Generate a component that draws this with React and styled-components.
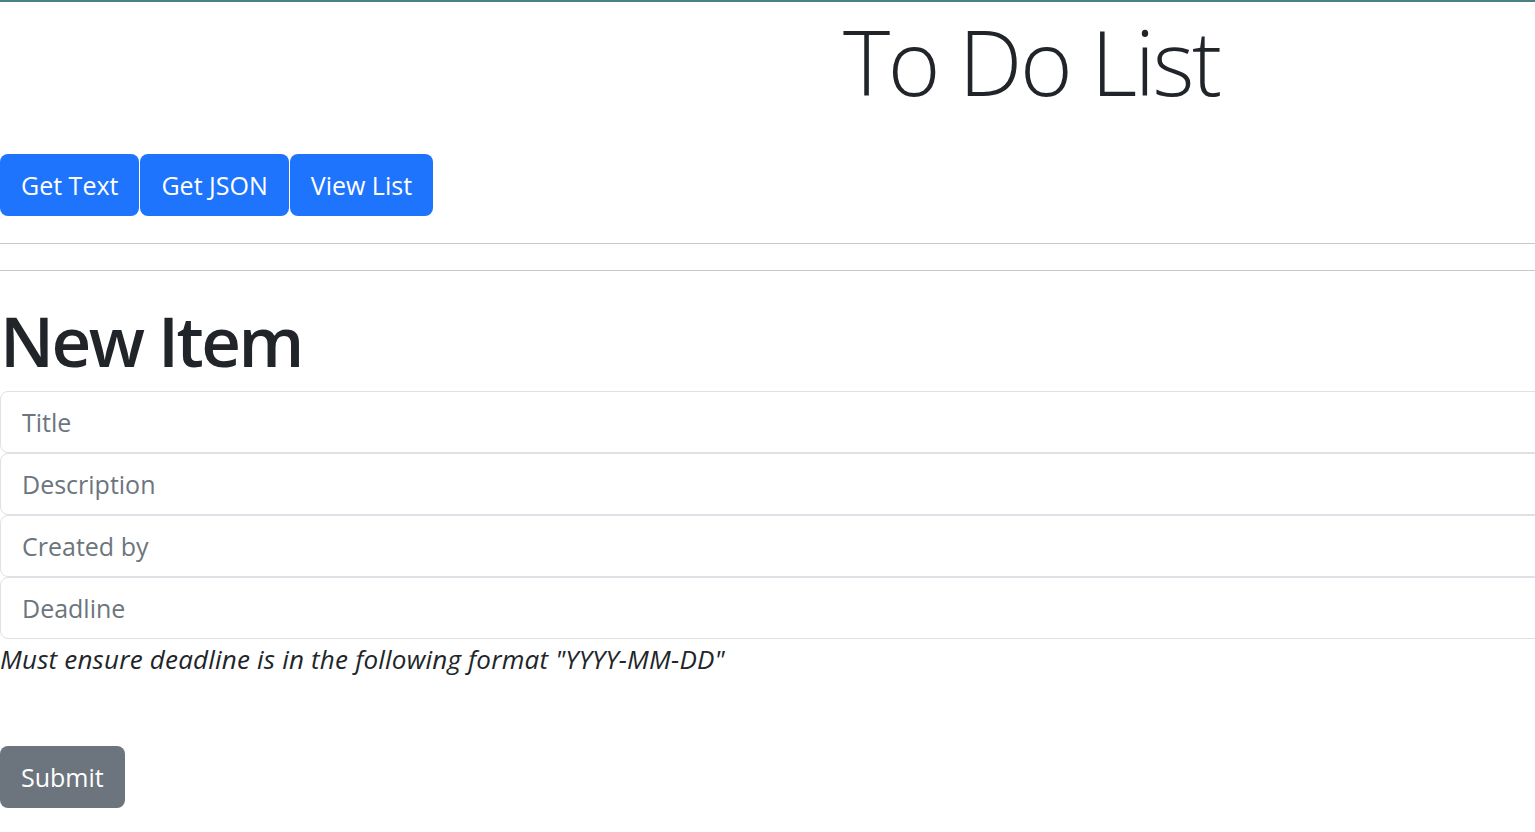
import React from "react";
import styled, { createGlobalStyle } from "styled-components";

const GlobalStyle = createGlobalStyle`
  html, body {
    margin: 0;
    padding: 0;
    overflow-x: hidden;
    background: #fff;
  }
  body {
    font-family: "Open Sans", "Noto Sans", sans-serif;
    color: #212529;
    border-top: 2px solid #4a7f84;
  }
  * {
    box-sizing: border-box;
  }
`;

const Header = styled.header`
  padding: 5px 0 0 843px;
  margin-bottom: 39px;
`;

const Title = styled.h1`
  margin: 0;
  font-size: 90px;
  font-weight: 300;
  line-height: 1.2;
  letter-spacing: -2.5px;
  white-space: nowrap;
`;

const Toolbar = styled.div`
  display: flex;
  gap: 1px;
`;

const Button = styled.button`
  height: 62px;
  padding: 0 21px;
  border: none;
  border-radius: 8px;
  font-family: inherit;
  font-size: 25px;
  color: #fff;
  background: ${(p) => (p.$variant === "secondary" ? "#6c757d" : "#1e74fd")};
  cursor: pointer;
`;

const Rule = styled.hr`
  margin: ${(p) => p.$top || 0}px 0 0;
  border: none;
  border-top: 1px solid #c8c8c8;
`;

const Heading = styled.h2`
  margin: 28px 0 9px;
  font-size: 69px;
  font-weight: 600;
  line-height: 1.2;
  letter-spacing: -2.5px;
`;

const Form = styled.form`
  display: flex;
  flex-direction: column;
`;

const Input = styled.input`
  width: calc(100% + 40px);
  height: 62px;
  padding: 0 21px;
  border: 1px solid #dee2e6;
  border-radius: 8px;
  font-family: inherit;
  font-size: 25px;
  color: #212529;
  background: #fff;
  &::placeholder {
    color: #6c757d;
  }
`;

const Hint = styled.em`
  display: block;
  font-size: 26px;
  line-height: 1.4;
  letter-spacing: 0.2px;
  margin: 2px 0 69px;
`;

const SubmitRow = styled.div`
  display: flex;
`;

export default function App() {
  return (
    <>
      <GlobalStyle />
      <Header>
        <Title>To Do List</Title>
      </Header>
      <Toolbar>
        <Button>Get Text</Button>
        <Button>Get JSON</Button>
        <Button>View List</Button>
      </Toolbar>
      <Rule $top={27} />
      <Rule $top={26} />
      <Heading>New Item</Heading>
      <Form onSubmit={(e) => e.preventDefault()}>
        <Input placeholder="Title" />
        <Input placeholder="Description" />
        <Input placeholder="Created by" />
        <Input placeholder="Deadline" />
        <Hint>Must ensure deadline is in the following format "YYYY-MM-DD"</Hint>
        <SubmitRow>
          <Button type="submit" $variant="secondary">
            Submit
          </Button>
        </SubmitRow>
      </Form>
    </>
  );
}
